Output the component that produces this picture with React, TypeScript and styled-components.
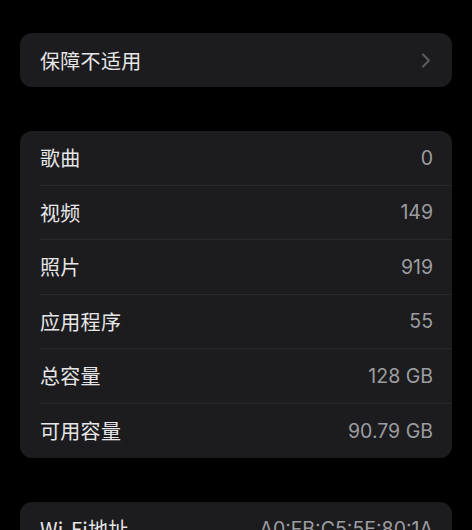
import React from "react";
import styled, { createGlobalStyle } from "styled-components";

const GlobalStyle = createGlobalStyle`
  html, body {
    margin: 0;
    padding: 0;
    background: #000;
  }
  body {
    font-family: "Inter", "Noto Sans CJK SC", sans-serif;
    -webkit-font-smoothing: antialiased;
  }
`;

const Page = styled.div`
  display: flex;
  flex-direction: column;
  gap: 44px;
  padding: 33px 20px 0 20px;
  height: 530px;
  overflow: hidden;
  box-sizing: border-box;
`;

const Card = styled.div`
  background: #1c1c1e;
  border-radius: 12px;
  display: flex;
  flex-direction: column;
  padding-left: 20px;
`;

type RowProps = {
  $last?: boolean;
};

const Row = styled.div<RowProps>`
  display: flex;
  align-items: center;
  justify-content: space-between;
  height: ${(p) => (p.$last ? "54px" : "53.5px")};
  padding-right: 19px;
  border-bottom: ${(p) => (p.$last ? "none" : "1px solid #2a2a2c")};
`;

const Label = styled.span`
  font-family: "Noto Sans CJK SC", sans-serif;
  font-size: 20px;
  color: #e6e6e8;
  letter-spacing: 0.3px;
`;

const Value = styled.span`
  font-size: 19.5px;
  color: #9c9ca0;
`;

const Chevron = () => (
  <svg width="10" height="15" viewBox="0 0 10 15" style={{ marginRight: 2 }}>
    <path
      d="M2 1.5 L8 7.5 L2 13.5"
      fill="none"
      stroke="#5c5c60"
      strokeWidth="2"
      strokeLinecap="round"
      strokeLinejoin="round"
    />
  </svg>
);

const stats = [
  ["歌曲", "0"],
  ["视频", "149"],
  ["照片", "919"],
  ["应用程序", "55"],
  ["总容量", "128 GB"],
  ["可用容量", "90.79 GB"],
];

export default function App() {
  return (
    <>
      <GlobalStyle />
      <Page>
        <Card>
          <Row $last>
            <Label>保障不适用</Label>
            <Chevron />
          </Row>
        </Card>
        <Card>
          {stats.map(([label, value], i) => (
            <Row key={label} $last={i === stats.length - 1}>
              <Label>{label}</Label>
              <Value>{value}</Value>
            </Row>
          ))}
        </Card>
        <Card>
          <Row $last>
            <Label>Wi-Fi地址</Label>
            <Value>A0:FB:C5:5E:80:1A</Value>
          </Row>
        </Card>
      </Page>
    </>
  );
}
